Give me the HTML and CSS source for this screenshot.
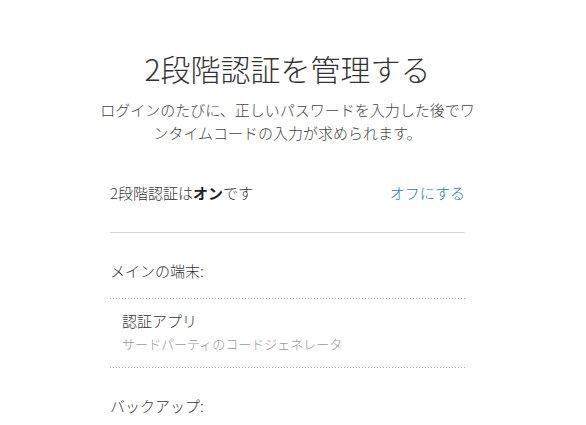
FILE: index.html
```html
<!DOCTYPE html>
<html>
<head>
    <title>2段階認証</title>
    <link rel="stylesheet" href="styles.css">
</head>
<body>
    <div class="page">
        <h1 class="title">2段階認証を管理する</h1>
        <p class="lead">ログインのたびに、正しいパスワードを入力した後でワンタイムコードの入力が求められます。</p>

        <div class="panel">
            <div class="status-row">
                <span>2段階認証は<b>オン</b>です</span>
                <a href="#" class="toggle">オフにする</a>
            </div>

            <div class="section-label">メインの端末:</div>
            <div class="device">
                <div class="device-name">認証アプリ</div>
                <div class="device-desc">サードパーティのコードジェネレータ</div>
            </div>

            <div class="section-label backup">バックアップ:</div>
        </div>
    </div>
</body>
</html>
```

FILE: styles.css
```css
body {
    margin: 0;
    font-family: "Noto Sans CJK JP", "Noto Sans", sans-serif;
    font-weight: 300;
    color: #333;
    background: #fff;
}
.page {
    width: 575px;
    padding-top: 48px;
}
.title {
    margin: 0;
    font-size: 30px;
    font-weight: 300;
    line-height: 40px;
    text-align: center;
    color: #333;
}
.lead {
    width: 380px;
    margin: 10px auto 0;
    font-size: 15px;
    line-height: 23px;
    text-align: center;
    color: #444;
}
.panel {
    width: 355px;
    margin: 38px auto 0;
}
.status-row {
    display: flex;
    justify-content: space-between;
    font-size: 15px;
    line-height: 22px;
    padding-bottom: 28px;
    border-bottom: 1px solid #d3d6da;
}
.status-row b {
    font-weight: 700;
    color: #222;
}
.toggle {
    color: #2a7bbd;
    text-decoration: none;
}
.section-label {
    margin-top: 27px;
    font-size: 15px;
    line-height: 22px;
    padding-bottom: 16px;
}
.section-label.backup {
    margin-top: 27px;
    padding-bottom: 0;
}
.device {
    padding: 12px 12px 13px;
    background-image: linear-gradient(to right, #aaa 1px, transparent 1px),
                      linear-gradient(to right, #aaa 1px, transparent 1px);
    background-size: 3px 1px, 3px 1px;
    background-repeat: repeat-x;
    background-position: left top, left bottom;
}
.device-name {
    font-size: 15px;
    line-height: 22px;
    color: #333;
}
.device-desc {
    margin-top: 1px;
    font-size: 13px;
    line-height: 22px;
    color: #999;
}
```
